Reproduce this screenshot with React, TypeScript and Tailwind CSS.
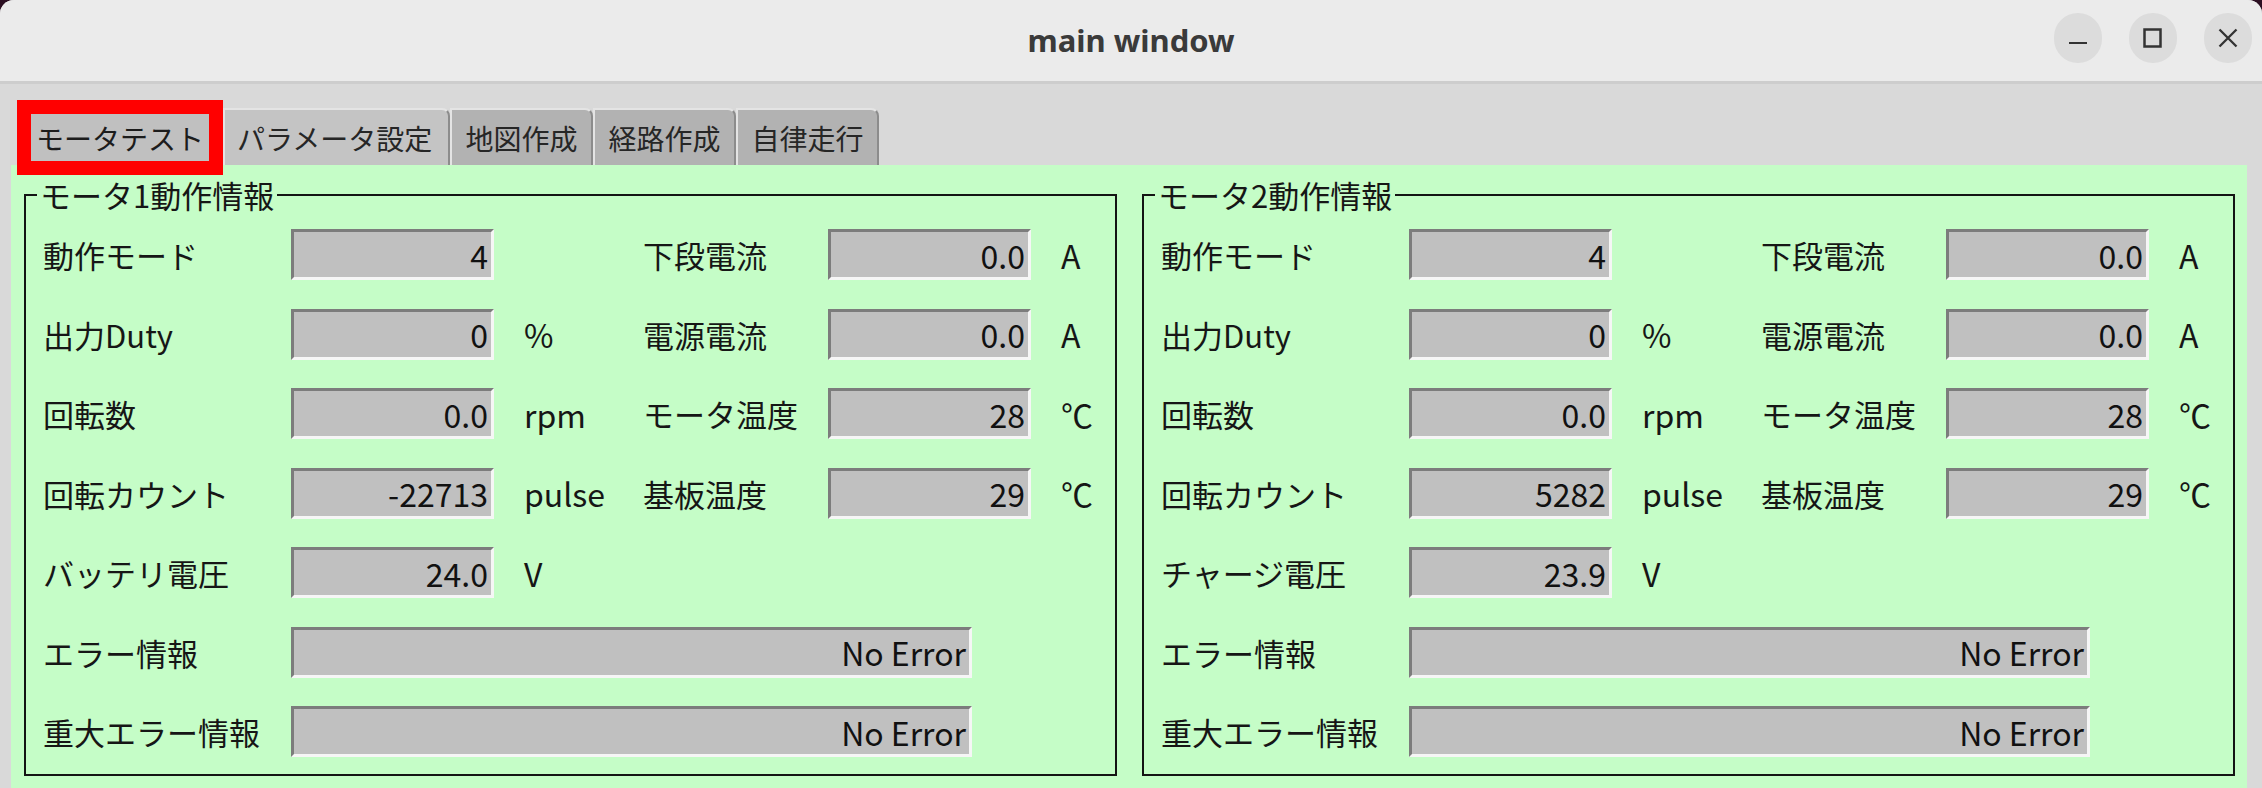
import React from "react";

const JP = { fontFamily: '"Noto Sans CJK JP", "Noto Sans", sans-serif' };

type Cell = { label: string; value: string; unit?: string };

interface MotorPanelProps {
  title: string;
  rows: [Cell, Cell | null][];
  errors: string[];
}

function ValueBox({ value, wide }: { value: string; wide?: boolean }) {
  return (
    <div
      className={`${wide ? "w-[681px]" : "w-[203px]"} h-[51px] flex items-center justify-end pr-[3px] bg-[#c0c0c0] border-t-[3px] border-l-[3px] border-t-[#7c7c7c] border-l-[#7c7c7c] border-b-[3px] border-r-[3px] border-b-[#f6f6f6] border-r-[#f6f6f6] text-[32px] leading-none text-[#111]`}
    >
      {value}
    </div>
  );
}

function MotorPanel({ title, rows, errors }: MotorPanelProps) {
  return (
    <fieldset className="border-2 border-[#141414] w-[1093px] h-[599px] pl-[17px]">
      <legend className="-ml-[6px] px-[3px] text-[31px] leading-[36px] text-[#161616]">{title}</legend>
      <div className="flex flex-col gap-[28.5px] pt-[16px]">
        {rows.map(([a, b], i) => (
          <div key={i} className="flex items-center text-[31px] leading-none text-[#161616]">
            <div className="w-[248px]">{a.label}</div>
            <ValueBox value={a.value} />
            <div className="w-[149px] pl-[30px] text-[32px]">{a.unit}</div>
            {b && (
              <>
                <div className="w-[185px]">{b.label}</div>
                <ValueBox value={b.value} />
                <div className="pl-[30px] text-[32px]">{b.unit}</div>
              </>
            )}
          </div>
        ))}
        {errors.map((label, i) => (
          <div key={label + i} className="flex items-center text-[31px] leading-none text-[#161616]">
            <div className="w-[248px]">{label}</div>
            <ValueBox value="No Error" wide />
          </div>
        ))}
      </div>
    </fieldset>
  );
}

const tabs = ["パラメータ設定", "地図作成", "経路作成", "自律走行"];

export default function App() {
  const motor1: [Cell, Cell | null][] = [
    [{ label: "動作モード", value: "4" }, { label: "下段電流", value: "0.0", unit: "A" }],
    [{ label: "出力Duty", value: "0", unit: "%" }, { label: "電源電流", value: "0.0", unit: "A" }],
    [{ label: "回転数", value: "0.0", unit: "rpm" }, { label: "モータ温度", value: "28", unit: "℃" }],
    [{ label: "回転カウント", value: "-22713", unit: "pulse" }, { label: "基板温度", value: "29", unit: "℃" }],
    [{ label: "バッテリ電圧", value: "24.0", unit: "V" }, null],
  ];
  const motor2: [Cell, Cell | null][] = [
    [{ label: "動作モード", value: "4" }, { label: "下段電流", value: "0.0", unit: "A" }],
    [{ label: "出力Duty", value: "0", unit: "%" }, { label: "電源電流", value: "0.0", unit: "A" }],
    [{ label: "回転数", value: "0.0", unit: "rpm" }, { label: "モータ温度", value: "28", unit: "℃" }],
    [{ label: "回転カウント", value: "5282", unit: "pulse" }, { label: "基板温度", value: "29", unit: "℃" }],
    [{ label: "チャージ電圧", value: "23.9", unit: "V" }, null],
  ];

  return (
    <div className="w-[2262px] h-[788px] bg-[#2c0f22] overflow-hidden" style={JP}>
      <div className="h-full rounded-t-[14px] bg-[#d9d9d9] flex flex-col overflow-hidden">
        {/* title bar */}
        <div className="h-[84px] shrink-0 bg-[#ebebeb] border-b-[3px] border-[#cdcdcd] grid grid-cols-[1fr_auto_1fr]">
          <div />
          <div
            className="pt-[20px] text-[31px] font-bold text-[#3a3a3a] leading-[40px]"
            style={{ fontFamily: '"Noto Sans", sans-serif' }}
          >
            main window
          </div>
          <div className="flex justify-end gap-[27px] pr-[10px] pt-[13px]">
            <button className="w-[48px] h-[50px] rounded-full bg-[#dcdcdc] flex items-center justify-center">
              <svg width="20" height="20" viewBox="0 0 20 20">
                <line x1="1" y1="15" x2="19" y2="15" stroke="#333" strokeWidth="2.2" />
              </svg>
            </button>
            <button className="w-[48px] h-[50px] rounded-full bg-[#dcdcdc] flex items-center justify-center">
              <svg width="20" height="20" viewBox="0 0 20 20">
                <rect x="1.5" y="1.5" width="16" height="17" fill="none" stroke="#333" strokeWidth="2.5" />
              </svg>
            </button>
            <button className="w-[48px] h-[50px] rounded-full bg-[#dcdcdc] flex items-center justify-center">
              <svg width="20" height="20" viewBox="0 0 20 20">
                <path d="M1.5 1.5 L18.5 18.5 M18.5 1.5 L1.5 18.5" stroke="#333" strokeWidth="2.3" />
              </svg>
            </button>
          </div>
        </div>

        {/* tabs */}
        <div className="h-[81px] shrink-0 flex items-end pl-[17px] pt-[16px]">
          <div className="relative z-10 -mb-[10px] h-[75px] w-[206px] border-[14px] border-[#ff0000] bg-[#c0c0c0] flex items-center justify-center text-[28px] text-[#1c1c1c]">
            モータテスト
          </div>
          {tabs.map((t, i) => (
            <div
              key={t}
              className={`h-[57px] flex items-center border-t-2 border-l-2 border-[#e4e4e4] border-r-2 border-r-[#8c8c8c] rounded-tr-[8px] text-[28px] text-[#262626] ${
                i === 0 ? "w-[227px] pl-[12px] bg-[#c4c4c4]" : "w-[143px] justify-center bg-[#b2b2b2]"
              }`}
            >
              {t}
            </div>
          ))}
        </div>

        {/* content */}
        <div className="flex-1 ml-[11px] mr-[15px] bg-[#c5fdc7] flex gap-[25px] pl-[13px] pt-[12px]">
          <MotorPanel title="モータ1動作情報" rows={motor1} errors={["エラー情報", "重大エラー情報"]} />
          <MotorPanel title="モータ2動作情報" rows={motor2} errors={["エラー情報", "重大エラー情報"]} />
        </div>
      </div>
    </div>
  );
}
